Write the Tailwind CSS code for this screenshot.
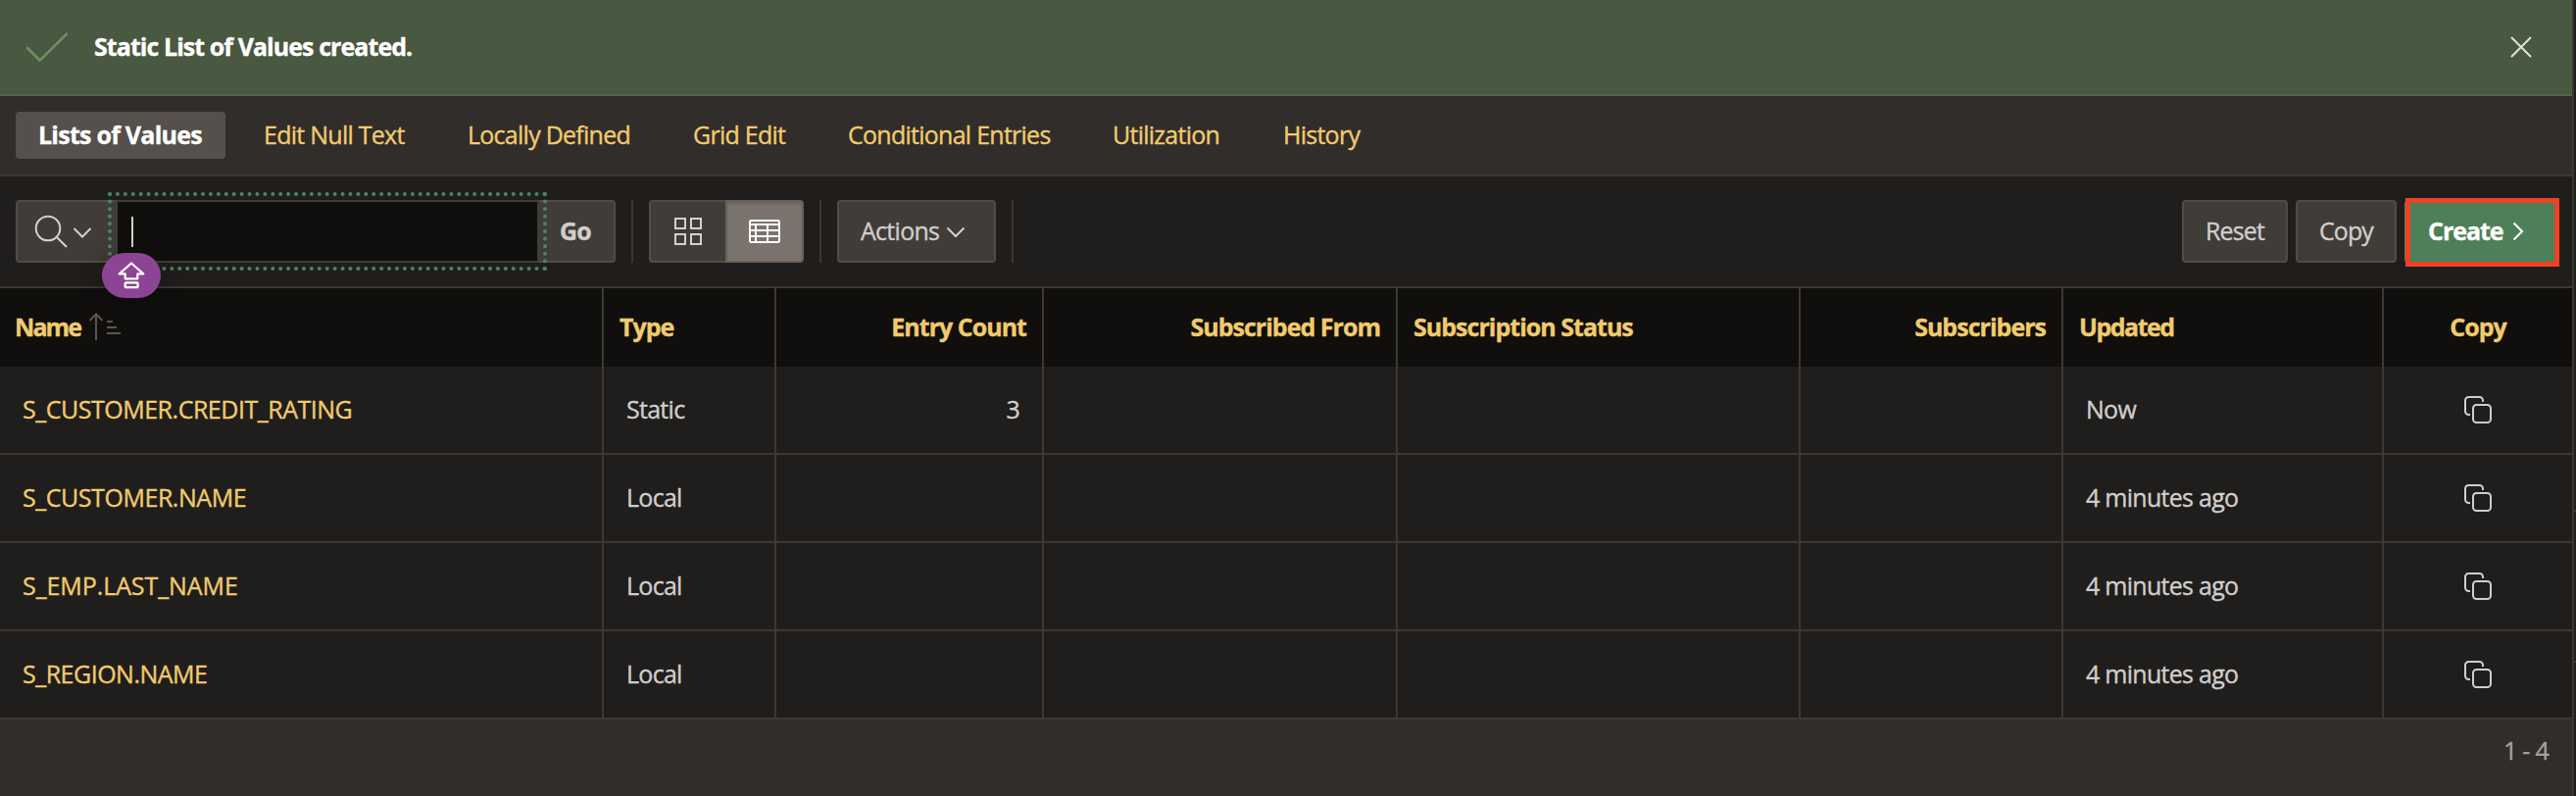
<!DOCTYPE html>
<html lang="en">
<head>
<meta charset="utf-8">
<title>Lists of Values</title>
<script src="https://cdn.jsdelivr.net/npm/@tailwindcss/browser@4"></script>
</head>
<body class="w-[2628px] h-[812px] overflow-hidden bg-[#201e1c] font-['Open_Sans',sans-serif] [-webkit-text-stroke:0.35px] text-[25px] leading-[34px] tracking-[-0.72px] text-[#d0cecc]">
<svg class="hidden">
  <symbol id="copy" viewBox="0 0 28 28"><g fill="none" stroke="currentColor" stroke-width="2"><rect x="9" y="9" width="18" height="18" rx="3.5"/><path d="M19 6V4.500A3.500 3.500 0 0 0 15.500 1H4.500A3.500 3.500 0 0 0 1 4.500v11A3.500 3.500 0 0 0 4.500 19H6"/></g></symbol>
</svg>
<div class="flex h-full">
<div class="w-[2626px] h-full flex flex-col border-r-2 border-[#3a3732]">
  <!-- Success message -->
  <div class="h-[98px] shrink-0 bg-[#495840] border-b-2 border-[#526549] flex items-center pl-[26px] pr-[41px]">
    <svg class="w-[44px] h-[30px]" viewBox="0 0 44 30" fill="none" stroke="#6f9163" stroke-width="2.600" stroke-linecap="round"><path d="M2 16l12.600 12.600L42 1.600"/></svg>
    <p class="ml-[26px] pb-[2px] font-bold text-white tracking-[-0.94px]">Static List of Values created.</p>
    <svg class="ml-auto w-[22px] h-[22px]" viewBox="0 0 22 22" fill="none" stroke="#dfe2dc" stroke-width="2"><path d="M1 1l20 20M21 1L1 21"/></svg>
  </div>
  <!-- Tabs -->
  <nav class="h-[82px] shrink-0 bg-[#312d2a] border-b-2 border-[#3c3833] flex items-center pl-4 text-[#f1cb6e] tracking-[-0.74px] whitespace-nowrap">
    <a class="w-[214px] h-12 mr-[39px] pb-[2px] rounded-[4px] bg-[#55504b] flex items-center pl-[23px] font-bold text-white tracking-[-0.75px]">Lists of Values</a>
    <a class="w-[208px] pb-[2px]">Edit Null Text</a>
    <a class="w-[230px] pb-[2px]">Locally Defined</a>
    <a class="w-[158px] pb-[2px]">Grid Edit</a>
    <a class="w-[270px] pb-[2px]">Conditional Entries</a>
    <a class="w-[174px] pb-[2px]">Utilization</a>
    <a class="pb-[2px]">History</a>
  </nav>
  <!-- Toolbar -->
  <div class="h-[114px] shrink-0 border-b-2 border-[#3c3933] flex items-center pl-4 pr-[14px]">
    <div class="relative flex h-16">
      <div class="w-[102px] border-2 border-r-0 border-[#514c47] bg-[#403c37] rounded-l-[4px] flex items-center pl-[17px]">
        <svg class="w-[60px] h-[36px]" viewBox="0 0 60 36" fill="none" stroke="#d3d1ce" stroke-width="2"><circle cx="14" cy="15" r="12.300"/><path d="M22.700 23.700L33 34M40.500 15l8.500 8.500 8.500-8.500"/></svg>
      </div>
      <div class="w-[432px] border-2 border-[#403c37] bg-[#100f0d] flex items-center pl-[14px]"><span class="w-[2px] h-[31px] bg-[#d3d1ce]"></span></div>
      <button class="w-[78px] pb-[2px] border-2 border-l-0 border-[#514c47] bg-[#403c37] rounded-r-[4px] pl-[21px] text-left font-bold tracking-[-0.9px]">Go</button>
      <div class="absolute left-[94px] -top-2 w-[448px] h-20 border-4 border-dotted border-[#4c8560]"></div>
      <div class="absolute left-[88px] top-[54px] w-[60px] h-[46px] rounded-full bg-[#8c4494] shadow-[0_4px_24px_rgba(0,0,0,0.35)] flex items-center justify-center">
        <svg class="w-[28px] h-[30px]" viewBox="0 0 28 30" fill="none" stroke="#fff" stroke-width="2.200" stroke-linejoin="round"><path d="M14 2.500L1.700 13.400H7.700V18.300H20.300V13.400H26.300zM8.500 22.300H19.800a.8.8 0 0 1 .8.800V26.400a.8.800 0 0 1-.8.800H8.500a.8.800 0 0 1-.8-.8V23.100a.8.800 0 0 1 .8-.8z"/></svg>
      </div>
    </div>
    <span class="mx-4 w-[2px] h-16 bg-[#3c3833]"></span>
    <div class="flex h-16">
      <div class="w-[78px] border-2 border-r-0 border-[#514c47] bg-[#403c37] rounded-l-[4px] flex items-center pl-[23px]">
        <svg class="w-[30px] h-[30px]" viewBox="0 0 30 30" fill="none" stroke="#d3d1ce" stroke-width="2"><path d="M2 2h10v10H2zM18 2h10v10H18zM2 18h10v10H2zM18 18h10v10H18z"/></svg>
      </div>
      <div class="w-[80px] border-2 border-[#67615c] bg-[#7a736e] rounded-r-[4px] shadow-[inset_0_2px_3px_rgba(0,0,0,0.12)] flex items-center justify-center">
        <svg class="w-[32px] h-[24px]" viewBox="0 0 32 24" fill="none" stroke="#fff" stroke-width="2"><rect x="1" y="1" width="30" height="22" rx="1.500"/><path d="M1 5h30M1 11h30M1 17h30M7 5v18M19 5v18"/></svg>
      </div>
    </div>
    <span class="mx-4 w-[2px] h-16 bg-[#3c3833]"></span>
    <button class="w-[162px] h-16 border-2 border-[#514c47] bg-[#403c37] rounded-[4px] flex items-center pl-[22px]"><span class="pb-[2px]">Actions</span>
      <svg class="ml-[7px] mt-[2px] w-[20px] h-[12px]" viewBox="0 0 20 12" fill="none" stroke="#d3d1ce" stroke-width="2"><path d="M1.500 1.500L10 10l8.500-8.500"/></svg></button>
    <span class="mx-4 w-[2px] h-16 bg-[#3c3833]"></span>
    <button class="ml-auto w-[108px] h-16 pb-[2px] border-2 border-[#514c47] bg-[#403c37] rounded-[4px] tracking-[-0.9px]">Reset</button>
    <button class="ml-2 w-[103px] h-16 pb-[2px] border-2 border-[#514c47] bg-[#403c37] rounded-[4px] tracking-[-0.9px]">Copy</button>
    <div class="relative ml-2 w-[157px] h-16 bg-[#4d7f58] rounded-[4px] flex items-center pl-[24px] font-bold text-white tracking-[-1.050px]"><span class="pb-[2px]">Create</span>
      <svg class="ml-[10px] w-[12px] h-[20px]" viewBox="0 0 12 20" fill="none" stroke="#fff" stroke-width="2"><path d="M1.500 1.500L10 10l-8.500 8.500"/></svg>
      <span class="absolute left-px -top-[2px] w-[157px] h-[70px] border-[5px] border-[#ee4125]"></span>
    </div>
  </div>
  <!-- Report -->
  <table class="w-[2624px] shrink-0 table-fixed border-separate border-spacing-0 [&_th]:h-20 [&_th]:bg-[#100f0d] [&_th]:px-4 [&_th]:pt-0 [&_th]:pb-[2px] [&_th]:border-r-2 [&_th]:border-[#3c3933] [&_td]:h-[90px] [&_td]:px-[23px] [&_td]:pt-0 [&_td]:pb-[2px] [&_td]:border-r-2 [&_td]:border-b-2 [&_td]:border-[#3c3933] [&_th:last-child]:border-r-0 [&_td:last-child]:border-r-0 [&_td:last-child]:pb-0">
    <colgroup><col class="w-[616px]"><col class="w-[176px]"><col class="w-[273px]"><col class="w-[361px]"><col class="w-[411px]"><col class="w-[268px]"><col class="w-[327px]"><col class="w-[192px]"></colgroup>
    <thead>
      <tr class="text-[#f1cb6e] tracking-[-0.98px] text-left font-bold">
        <th><div class="flex items-center"><span class="-ml-px tracking-[-1.900px]">Name</span>
          <svg class="ml-[8px] w-[34px] h-[28px]" viewBox="0 0 34 28" fill="none" stroke="#5a5753" stroke-width="2"><path d="M8 28V2M1.500 8L8 1.500 14.500 8M19 9h6M19 15h10M19 21h14"/></svg></div></th>
        <th>Type</th><th class="text-right">Entry Count</th><th class="text-right">Subscribed From</th><th>Subscription Status</th><th class="text-right">Subscribers</th><th class="tracking-[-1.500px]">Updated</th><th class="text-center">Copy</th>
      </tr>
    </thead>
    <tbody>
      <tr><td class="text-[#f1cb6e] tracking-[-0.48px]">S_CUSTOMER.CREDIT_RATING</td><td>Static</td><td class="text-right">3</td><td></td><td></td><td></td><td>Now</td><td><svg class="block mx-auto w-7 h-7"><use href="#copy"/></svg></td></tr>
      <tr><td class="text-[#f1cb6e] tracking-[-0.45px]">S_CUSTOMER.NAME</td><td>Local</td><td></td><td></td><td></td><td></td><td>4 minutes ago</td><td><svg class="block mx-auto w-7 h-7"><use href="#copy"/></svg></td></tr>
      <tr><td class="text-[#f1cb6e] tracking-[-0.08px]">S_EMP.LAST_NAME</td><td>Local</td><td></td><td></td><td></td><td></td><td>4 minutes ago</td><td><svg class="block mx-auto w-7 h-7"><use href="#copy"/></svg></td></tr>
      <tr><td class="text-[#f1cb6e] tracking-[-0.5px]">S_REGION.NAME</td><td>Local</td><td></td><td></td><td></td><td></td><td>4 minutes ago</td><td><svg class="block mx-auto w-7 h-7"><use href="#copy"/></svg></td></tr>
    </tbody>
  </table>
  <div class="grow bg-[#312d2a] flex justify-end pt-[14px] pr-[24px] text-[#a5a29f]">1 - 4</div>
</div>
<div class="w-[2px] flex flex-col">
  <div class="h-[98px] bg-[#231b1c]"></div><div class="h-[422px]"></div><div class="h-[2px] bg-[#3a3732]"></div><div class="h-[152px]"></div><div class="h-[2px] bg-[#3a3732]"></div>
</div>
</div>
</body>
</html>
